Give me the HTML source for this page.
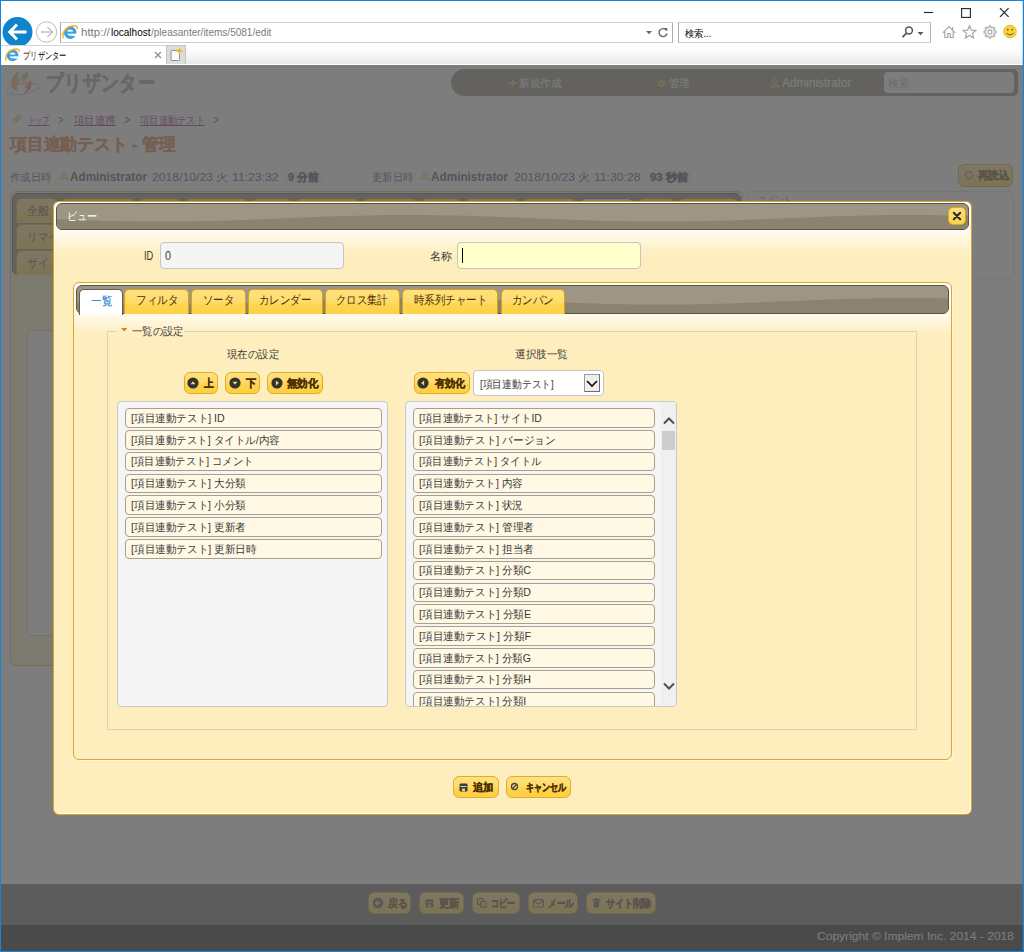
<!DOCTYPE html>
<html lang="ja">
<head>
<meta charset="utf-8">
<title>プリザンター</title>
<style>
*{box-sizing:border-box;margin:0;padding:0}
html,body{width:1024px;height:952px;overflow:hidden;background:#fff}
body{font-family:"Liberation Sans",sans-serif;font-size:12px;color:#000;position:relative}
#page,#chrome,#frame{position:absolute;left:0;top:0;width:1024px;height:952px;overflow:hidden}
#page div,#chrome div,#page svg,#chrome svg{position:absolute}
.t{position:absolute;white-space:nowrap;transform-origin:0 50%}
.bdg{background:#f2f2f2}
/* ---------- window frame ---------- */
#frame{border:1px solid #1883d7;box-shadow:inset -1px 0 0 rgba(24,131,215,.25);pointer-events:none}
#chrome{height:65px;background:#fff}
#tabrow{left:0;top:45px;width:1024px;height:19px;background:linear-gradient(#fff 0%,#fbfbfb 35%,#e8e8e8 100%)}
#tab1{left:1px;top:0;width:166px;height:20px;background:#fff;border-top:1px solid #d4d4d4}
#newtab{left:166px;top:0;width:20px;height:19px;background:#dcdcdc;border:1px solid #c2c2c2;border-bottom:none}
#addr{left:60px;top:22px;width:613px;height:21px;border:1px solid #cfcfcf;border-left-color:#a8a8a8;border-right-color:#b0b0b0;background:#fff}
#srch{left:678px;top:22px;width:253px;height:21px;border:1px solid #cfcfcf;border-left-color:#a8a8a8;border-right-color:#b0b0b0;background:#fff}
/* ---------- page ---------- */
#page{background:#fff}
#overlay{left:0;top:65px;width:1024px;height:887px;background:rgba(92,92,92,.8)}
#nav{left:451px;top:69px;width:567px;height:27px;border-radius:14px 5px 5px 14px;background:#817865}
#nav .sb{left:433px;top:3px;width:130px;height:21px;background:#fff;border-radius:4px}
#reload{left:958px;top:164px;width:55px;height:23px;border:1px solid #d19405;border-radius:6px;background:linear-gradient(#fee07e 0,#fedb6c 45%,#fed350 58%,#fecf42 100%)}
#etabs{left:10px;top:191px;width:733px;height:475px;border:1px solid #d8b24a;border-radius:6px;background:#feeebd}
#etnav{left:12px;top:193px;width:729px;height:82px;border:1px solid #494437;border-radius:6px;background:#817865}
.et{left:16px;width:722px;height:25px;border:1px solid #d19405;border-bottom:none;border-radius:6px 6px 0 0;background:linear-gradient(#fee07e 0,#fedb6c 45%,#fed350 58%,#fecf42 100%)}
#epanel{left:27px;top:330px;width:700px;height:306px;border:1px solid #c0c0c0;border-radius:4px;background:#fff}
#cmt{left:748px;top:191px;width:266px;height:88px;border:1px solid #d8d8d8;border-radius:6px;background:#fff}
#cmdbar{left:0;top:884px;width:1024px;height:41px;background:rgba(0,0,0,.65)}
#footer{left:0;top:925px;width:1024px;height:27px;background:#000}
.cb{top:892px;height:22px;border:1px solid #d19405;border-radius:6px;background:linear-gradient(#fee07e 0,#fedb6c 45%,#fed350 58%,#fecf42 100%)}
/* ---------- dialog ---------- */
#dlg{left:53px;top:201px;width:919px;height:614px;border:1px solid #dba52a;border-radius:6px;box-shadow:inset -1px -1px 0 rgba(255,249,228,.9);background:linear-gradient(#fffefb 0px,#fffefa 20px,#fffbef 29px,#fff5d8 40px,#fef0c5 48px,#feeebd 57px,#feeebd 100%)}
.hdr{border:1px solid #5a5444;border-radius:6px;background:#9e9684;overflow:hidden}
#dtitle{left:56px;top:203px;width:913px;height:27px}
#dclose{left:947.5px;top:207px;width:18px;height:18px;border:1px solid #e0a91c;border-radius:5px;background:linear-gradient(#fedf7a,#fed24a)}
.inp{height:27px;border:1px solid #c4c4c4;border-radius:4px}
#tabs{left:73px;top:282px;width:879px;height:478px;border:1px solid #dca72c;border-radius:6px;box-shadow:1px 1px 0 rgba(255,249,228,.8);background:linear-gradient(#fffefb 0px,#fffefa 20px,#fffbef 29px,#fff5d8 40px,#fef0c5 48px,#feeebd 57px,#feeebd 100%)}
#tnav{left:76px;top:285px;width:873px;height:29px}
.tb{top:288.6px;height:25px;border:1px solid #d9a01e;border-bottom:none;border-radius:5px 5px 0 0;background:linear-gradient(#fee07e 0,#fedb6c 50%,#fed450 62%,#fed04a 100%)}
.tb.on{top:289px;height:25.5px;background:#fff;border-color:#655e4e}
#fs{left:107px;top:331px;width:810px;height:399px;border:1px solid #d8d2be;border-top:none;border-radius:2px}
.fst{top:331px;height:1px;background:#d8d2be}
.btn{height:22px;border:1px solid #e2ab2a;border-radius:6px;background:linear-gradient(#fee07e 0,#fedb6c 45%,#fed350 58%,#fecf42 100%)}
.lst{top:401px;width:271px;height:305.5px;border:1px solid #c8c8c8;border-radius:4px;background:#f5f5f5;overflow:hidden}
.it{left:6.5px;height:19.5px;border:1px solid #a89f86;border-radius:4px;background:#fff8e4;font-size:12px;color:#383838}
.it .t{color:#383838}
#sel{left:473.2px;top:370.2px;width:131px;height:25.5px;border:1px solid #c4c4c4;border-radius:4px;background:#fff}
#sel u{position:absolute;left:110px;top:3.3px;width:16px;height:18px;border:1px solid #9a9a9a;border-right-color:#6e6e6e;border-bottom-color:#6e6e6e;background:#efefef}
#sbar{right:0;top:0;width:15px;height:304px;background:#f0f0f0}
#sthumb{left:1px;top:29px;width:13px;height:19px;background:#cdcdcd}
</style>
</head>
<body>
<div id="page">
  <!-- ======= underlying page ======= -->
  <svg width="40" height="30" viewBox="0 0 40 30" style="left:3px;top:68px">
    <ellipse cx="19.5" cy="21" rx="16.8" ry="5.2" fill="none" stroke="#b9b9b9" stroke-width="1" transform="rotate(-9 19.5 21)"/>
    <circle cx="8.8" cy="24.8" r="1.1" fill="#9a9a9a"/>
    <path d="M15.5 3.5C9 7 6.2 14 9.5 19.5c1.2 2 3 3.6 5 4.6-1-3-.8-6 .6-8.400 1.600-2.800 2.600-4.200 1.800-6.200-.6 1.600-2 2.400-3.200 1.800 1.400-2 1.800-5 1.800-7.800z" fill="#f4a556"/>
    <circle cx="14.400" cy="10.200" r="1.700" fill="#f7bf86"/>
    <path d="M18.200 6.500c1.400 1.600 3.400 1.600 4.800.6-1 1.200-1.600 2.600-1.400 4.400l.6 3.600c-1.800-1-3-2.600-3.400-4.600-.2-1.400-.2-2.800-.6-4z" fill="#b3c736"/>
    <path d="M22 3c2 .6 3.400 2.400 3 5-.400 2.200-1.600 3.800-3.200 5 .8-2 .8-3.800.2-5.400-.2-1.600-.2-3.200 0-4.600z" fill="#b3c736"/>
    <circle cx="20.400" cy="7" r="1.600" fill="#c9d75e"/>
    <path d="M27 11.500c2.600 3.800 2 8.800-1.600 11.500-1.600 1.200-3.400 1.800-5.200 2 2.400-1.600 3.800-3.600 4-6-.8 1-2.200 1.200-3.400.6 2.800-1.200 5.200-4.200 6.200-8.100z" fill="#ee7452"/>
    <circle cx="23.900" cy="16" r="1.700" fill="#f29077"/>
  </svg>
  <span class="t" style="transform:scaleX(0.8321);left:46px;top:69px;font-size:21.2px;line-height:27px;color:#909090;font-weight:bold;-webkit-text-stroke:.7px #909090;">プリザンター</span>
  <div id="nav">
    <div class="sb"></div>
  </div>
  <svg width="8" height="8" style="left:509px;top:79px"><path d="M4 0v8M0 4h8" stroke="#e0b94a" stroke-width="2"/></svg>
  <span class="t" style="transform:scaleX(0.9682);left:519px;top:75px;font-size:11.0px;line-height:16px;color:#fff;">新規作成</span>
  <svg width="9" height="9" viewBox="-4.5 -4.5 9 9" style="left:657px;top:78.5px"><circle r="2.6" fill="none" stroke="#e0b94a" stroke-width="2.4" stroke-dasharray="1.4 .65"/><circle r="2" fill="none" stroke="#e0b94a" stroke-width="1.4"/></svg>
  <span class="t" style="transform:scaleX(0.9318);left:668.5px;top:75px;font-size:11.0px;line-height:16px;color:#fff;">管理</span>
  <svg width="10" height="10" viewBox="0 0 10 10" style="left:770px;top:78px"><circle cx="5" cy="3" r="2" fill="none" stroke="#e0b94a" stroke-width="1.1"/><path d="M1 9c0-2.6 8-2.6 8 0z" fill="none" stroke="#e0b94a" stroke-width="1.1"/></svg>
  <span class="t" style="transform:scaleX(0.9832);left:782px;top:75px;font-size:12px;line-height:16px;color:#fff;">Administrator</span>
  <span class="t" style="transform:scaleX(0.9591);left:887.5px;top:74.5px;font-size:11.0px;line-height:16px;color:#a9a9a9;">検索</span>
  <svg width="10" height="10" viewBox="0 0 10 10" style="left:11.500px;top:113.500px"><g transform="rotate(-40 5 5)" fill="none" stroke="#dfb64a" stroke-width="1.500"><rect x=".8" y="3.400" width="4.800" height="3.200" rx="1.600"/><rect x="4.400" y="3.400" width="4.800" height="3.200" rx="1.600"/></g></svg>
  <span class="t" style="transform:scaleX(0.6515);left:28px;top:112.2px;font-size:11.0px;line-height:16px;color:#800080;text-decoration:underline;">トップ</span>
  <span class="t" style="transform:scaleX(0.7840);left:58px;top:112.2px;font-size:12px;line-height:16px;color:#333;">&gt;</span>
  <span class="t" style="transform:scaleX(0.9523);left:73.6px;top:112.2px;font-size:11.0px;line-height:16px;color:#800080;text-decoration:underline;">項目連携</span>
  <span class="t" style="transform:scaleX(0.8980);left:123.7px;top:112.2px;font-size:12px;line-height:16px;color:#333;">&gt;</span>
  <span class="t" style="transform:scaleX(0.8442);left:140.2px;top:112.2px;font-size:11.0px;line-height:16px;color:#800080;text-decoration:underline;">項目連動テスト</span>
  <span class="t" style="transform:scaleX(0.8125);left:213.3px;top:112.2px;font-size:12px;line-height:16px;color:#333;">&gt;</span>
  <span class="t" style="transform:scaleX(0.9872);left:9.6px;top:134.3px;font-size:16.6px;line-height:22px;color:#d2691e;font-weight:bold;-webkit-text-stroke:.4px #d2691e;">項目連動テスト - 管理</span>

  <span class="t" style="transform:scaleX(0.9432);left:10px;top:168.6px;font-size:11.0px;line-height:16px;color:#333;">作成日時</span>
  <svg class="pi" width="10" height="9" viewBox="0 0 10 9" style="left:58.5px;top:170.5px"><circle cx="5" cy="2.6" r="1.9" fill="none" stroke="#e0b94a" stroke-width="1.1"/><path d="M1 8c0-2.6 8-2.6 8 0z" fill="none" stroke="#e0b94a" stroke-width="1.1"/></svg>
  <span class="t" style="transform:scaleX(0.9786);left:69.8px;top:168.6px;font-size:12px;line-height:16px;color:#333;font-weight:bold;">Administrator</span>
  <span class="t" style="transform:scaleX(1.1089);left:151.8px;top:168.6px;font-size:11.0px;line-height:16px;color:#333;">2018/10/23 火 11:23:32</span>
  <div class="bdg" style="left:283px;top:170px;width:40px;height:13px"></div>
  <span class="t" style="transform:scaleX(0.9812);left:288.4px;top:168.6px;font-size:11.0px;line-height:16px;color:#333;font-weight:bold;-webkit-text-stroke:.3px #333;">9 分前</span>
  <span class="t" style="transform:scaleX(0.9409);left:371.6px;top:168.6px;font-size:11.0px;line-height:16px;color:#333;">更新日時</span>
  <svg class="pi" width="10" height="9" viewBox="0 0 10 9" style="left:419.5px;top:170.5px"><circle cx="5" cy="2.6" r="1.9" fill="none" stroke="#e0b94a" stroke-width="1.1"/><path d="M1 8c0-2.6 8-2.6 8 0z" fill="none" stroke="#e0b94a" stroke-width="1.1"/></svg>
  <span class="t" style="transform:scaleX(0.9798);left:431.4px;top:168.6px;font-size:12px;line-height:16px;color:#333;font-weight:bold;">Administrator</span>
  <span class="t" style="transform:scaleX(1.1080);left:513.5px;top:168.6px;font-size:11.0px;line-height:16px;color:#333;">2018/10/23 火 11:30:28</span>
  <div class="bdg" style="left:645px;top:170px;width:47px;height:13px"></div>
  <span class="t" style="transform:scaleX(1.0269);left:649.7px;top:168.6px;font-size:11.0px;line-height:16px;color:#333;font-weight:bold;-webkit-text-stroke:.3px #333;">93 秒前</span>

  <div id="reload"></div>
  <svg width="10" height="10" viewBox="-5 -5 10 10" style="left:963.5px;top:170px"><path d="M-3.4 1A3.5 3.5 0 0 1 2 -2.9M3.4 -1A3.5 3.5 0 0 1 -2 2.9" fill="none" stroke="#777" stroke-width="1.3"/><path d="M.8 -4.6L3.6 -2.4.6 -1.2zM-.8 4.6L-3.6 2.4-.6 1.2z" fill="#777"/></svg>
  <span class="t" style="transform:scaleX(0.9394);left:978px;top:167.3px;font-size:11.0px;line-height:16px;color:#4c3000;font-weight:bold;-webkit-text-stroke:.3px #4c3000;">再読込</span>

  <div id="etabs"></div>
  <div id="etnav"></div>
  <div class="et" style="top:198px;left:16px;width:42px"></div>
  <div class="et" style="top:198px;left:61px;width:74px"></div>
  <div class="et" style="top:198px;left:139px;width:42px"></div>
  <div class="et" style="top:198px;left:185px;width:63px"></div>
  <div class="et" style="top:198px;left:252px;width:40px"></div>
  <div class="et" style="top:198px;left:296px;width:63px"></div>
  <div class="et" style="top:198px;left:363px;width:54px"></div>
  <div class="et" style="top:198px;left:421px;width:40px"></div>
  <div class="et" style="top:198px;left:465px;width:54px"></div>
  <div class="et" style="top:198px;left:523px;width:53px"></div>
  <div class="et" style="top:198px;left:580px;width:54px;background:#fff;border-color:#655e4e"></div>
  <div class="et" style="top:198px;left:638px;width:37px"></div>
  <div class="et" style="top:198px;left:679px;width:59px"></div>
  <div class="et" style="top:224px"></div>
  <div class="et" style="top:250px"></div>
  <span class="t" style="transform:scaleX(0.9583);left:27px;top:202.5px;font-size:12.0px;line-height:17px;color:#4c3000;">全般</span>
  <span class="t" style="transform:scaleX(0.8750);left:27px;top:228.5px;font-size:12.0px;line-height:17px;color:#4c3000;">リマインダー</span>
  <span class="t" style="transform:scaleX(0.9417);left:27px;top:254.5px;font-size:12.0px;line-height:17px;color:#4c3000;">サイトのアクセス制御</span>
  <div id="epanel"></div>
  <div id="cmt"></div>
  <span class="t" style="transform:scaleX(0.7955);left:757px;top:191.5px;font-size:11.0px;line-height:16px;color:#777;">コメント</span>

  <div id="cmdbar"></div>
  <div class="cb" style="left:368px;width:43px"></div>
  <div class="cb" style="left:419px;width:45px"></div>
  <div class="cb" style="left:472px;width:48px"></div>
  <div class="cb" style="left:528px;width:50px"></div>
  <div class="cb" style="left:586px;width:70px"></div>
  <svg width="12" height="12" viewBox="-6 -6 12 12" style="left:371.5px;top:897px"><circle r="5.2" fill="#444"/><path d="M2.6 0h-4.6M.2 -2.6l-2.6 2.6 2.6 2.6" fill="none" stroke="#fece2f" stroke-width="1.5"/></svg>
  <svg width="9" height="9" viewBox="0 0 9 9" style="left:424.5px;top:898.5px"><rect x=".5" y=".5" width="8" height="8" rx="1.3" fill="#444"/><rect x="1.500" y="3" width="6" height="1" fill="#fece2f"/><rect x="3" y="5.600" width="3" height="2.400" fill="#fece2f"/></svg>
  <svg width="10" height="10" viewBox="0 0 10 10" style="left:477px;top:898px"><rect x=".6" y=".6" width="5.6" height="6" rx="1" fill="none" stroke="#444" stroke-width="1.2"/><rect x="3.6" y="3.4" width="5.6" height="6" rx="1" fill="#fece2f" stroke="#444" stroke-width="1.2"/></svg>
  <svg width="11" height="9" viewBox="0 0 11 9" style="left:533px;top:899px"><rect x=".6" y=".6" width="9.8" height="7.4" rx="1.2" fill="none" stroke="#444" stroke-width="1.2"/><path d="M1 1.5l4.5 3.6L10 1.5" fill="none" stroke="#444" stroke-width="1.1"/></svg>
  <svg width="9" height="10" viewBox="0 0 9 10" style="left:592px;top:898px"><path d="M.5 2h8M3 1h3" stroke="#444" stroke-width="1.3"/><path d="M1.4 3.2h6.2l-.6 6.3H2z" fill="#444"/></svg>
  <span class="t" style="transform:scaleX(0.8955);left:388px;top:895.3px;font-size:11.0px;line-height:16px;color:#4c3000;font-weight:bold;-webkit-text-stroke:.3px #4c3000;">戻る</span>
  <span class="t" style="transform:scaleX(0.9409);left:438.7px;top:895.3px;font-size:11.0px;line-height:16px;color:#4c3000;font-weight:bold;-webkit-text-stroke:.3px #4c3000;">更新</span>
  <span class="t" style="transform:scaleX(0.7424);left:490.5px;top:895.3px;font-size:11.0px;line-height:16px;color:#4c3000;font-weight:bold;-webkit-text-stroke:.3px #4c3000;">コピー</span>
  <span class="t" style="transform:scaleX(0.7788);left:547.6px;top:895.3px;font-size:11.0px;line-height:16px;color:#4c3000;font-weight:bold;-webkit-text-stroke:.3px #4c3000;">メール</span>
  <span class="t" style="transform:scaleX(0.8255);left:605.6px;top:895.3px;font-size:11.0px;line-height:16px;color:#4c3000;font-weight:bold;-webkit-text-stroke:.3px #4c3000;">サイト削除</span>
  <div id="footer"></div>
  <span class="t" style="transform:scaleX(1.0949);left:817px;top:928.8px;font-size:11px;line-height:15px;color:#fff;">Copyright © Implem Inc. 2014 - 2018</span>
  <div id="overlay"></div>

  <!-- ======= dialog ======= -->
  <div id="dlg"></div>
  <div id="dtitle" class="hdr"><svg width="911" height="25" style="left:0;top:0"><path d="M0,27 L0,15.2 L10,15.6 L20,16.0 L30,16.3 L40,16.6 L50,16.9 L60,17.1 L70,17.3 L80,17.5 L90,17.6 L100,17.6 L110,17.6 L120,17.5 L130,17.4 L140,17.2 L150,17.0 L160,16.8 L170,16.5 L180,16.2 L190,15.8 L200,15.4 L210,15.0 L220,14.6 L230,14.2 L240,13.8 L250,13.4 L260,13.0 L270,12.6 L280,12.3 L290,12.0 L300,11.7 L310,11.5 L320,11.3 L330,11.1 L340,11.0 L350,11.0 L360,11.0 L370,11.1 L380,11.2 L390,11.4 L400,11.6 L410,11.8 L420,12.1 L430,12.4 L440,12.8 L450,13.2 L460,13.6 L470,14.0 L480,14.4 L490,14.8 L500,15.2 L510,15.6 L520,16.0 L530,16.3 L540,16.6 L550,16.9 L560,17.1 L570,17.3 L580,17.5 L590,17.6 L600,17.6 L610,17.6 L620,17.5 L630,17.4 L640,17.2 L650,17.0 L660,16.8 L670,16.5 L680,16.2 L690,15.8 L700,15.4 L710,15.0 L720,14.6 L730,14.2 L740,13.8 L750,13.4 L760,13.0 L770,12.6 L780,12.3 L790,12.0 L800,11.7 L810,11.5 L820,11.3 L830,11.1 L840,11.0 L850,11.0 L860,11.0 L870,11.1 L880,11.2 L890,11.4 L900,11.6 L910,11.8 L920,12.1 L921,27 Z" fill="#8b8370"/></svg></div>
  <span class="t" style="transform:scaleX(0.9273);left:67px;top:207.6px;font-size:11.0px;line-height:16px;color:#fff;">ビュー</span>
  <div id="dclose"></div>
  <svg width="10" height="10" viewBox="0 0 10 10" style="left:952px;top:211px"><path d="M1.800 1.800l6.400 6.400M8.200 1.800L1.800 8.200" stroke="#2b2b2b" stroke-width="2.100" stroke-linecap="round"/></svg>
  <span class="t" style="transform:scaleX(0.7750);left:144px;top:248px;font-size:12px;line-height:16px;color:#383838;">ID</span>
  <div class="inp" style="left:160px;top:242px;width:184px;background:#f5f5f5"></div>
  <span class="t" style="transform:scaleX(0.8972);left:165px;top:248px;font-size:12px;line-height:16px;color:#383838;">0</span>
  <span class="t" style="transform:scaleX(1.0000);left:430px;top:248px;font-size:11.0px;line-height:16px;color:#383838;">名称</span>
  <div class="inp" style="left:457px;top:242px;width:184px;background:#ffffcc"></div>
  <div style="left:462px;top:248px;width:1px;height:15px;background:#000"></div>
  <div id="tabs"></div>
  <div id="tnav" class="hdr"><svg width="871" height="27" style="left:0;top:0"><path d="M0,29 L0,17.0 L10,17.3 L20,17.6 L30,17.9 L40,18.1 L50,18.3 L60,18.5 L70,18.6 L80,18.6 L90,18.6 L100,18.5 L110,18.4 L120,18.2 L130,18.0 L140,17.8 L150,17.5 L160,17.2 L170,16.8 L180,16.4 L190,16.0 L200,15.6 L210,15.2 L220,14.8 L230,14.4 L240,14.0 L250,13.6 L260,13.3 L270,13.0 L280,12.7 L290,12.5 L300,12.3 L310,12.1 L320,12.0 L330,12.0 L340,12.0 L350,12.1 L360,12.2 L370,12.4 L380,12.6 L390,12.8 L400,13.1 L410,13.4 L420,13.8 L430,14.2 L440,14.6 L450,15.0 L460,15.4 L470,15.8 L480,16.2 L490,16.6 L500,17.0 L510,17.3 L520,17.6 L530,17.9 L540,18.1 L550,18.3 L560,18.5 L570,18.6 L580,18.6 L590,18.6 L600,18.5 L610,18.4 L620,18.2 L630,18.0 L640,17.8 L650,17.5 L660,17.2 L670,16.8 L680,16.4 L690,16.0 L700,15.6 L710,15.2 L720,14.8 L730,14.4 L740,14.0 L750,13.6 L760,13.3 L770,13.0 L780,12.7 L790,12.5 L800,12.3 L810,12.1 L820,12.0 L830,12.0 L840,12.0 L850,12.1 L860,12.2 L870,12.4 L880,12.6 L881,29 Z" fill="#8b8370"/></svg></div>
  <div class="tb on" style="left:79px;width:44px"></div>
  <div class="tb" style="left:124.2px;width:64.5px"></div>
  <div class="tb" style="left:191.3px;width:54.3px"></div>
  <div class="tb" style="left:248px;width:74.5px"></div>
  <div class="tb" style="left:325px;width:74.7px"></div>
  <div class="tb" style="left:402.3px;width:95.8px"></div>
  <div class="tb" style="left:500.5px;width:64.8px"></div>
  <span class="t" style="transform:scaleX(0.8750);left:90.5px;top:292.5px;font-size:12.0px;line-height:17px;color:#0074c7;">一覧</span>
  <span class="t" style="transform:scaleX(0.8750);left:136px;top:291.9px;font-size:12.0px;line-height:17px;color:#4c3000;">フィルタ</span>
  <span class="t" style="transform:scaleX(0.8611);left:203px;top:291.9px;font-size:12.0px;line-height:17px;color:#4c3000;">ソータ</span>
  <span class="t" style="transform:scaleX(0.8667);left:259px;top:291.9px;font-size:12.0px;line-height:17px;color:#4c3000;">カレンダー</span>
  <span class="t" style="transform:scaleX(0.8617);left:336.3px;top:291.9px;font-size:12.0px;line-height:17px;color:#4c3000;">クロス集計</span>
  <span class="t" style="transform:scaleX(0.8714);left:413.8px;top:291.9px;font-size:12.0px;line-height:17px;color:#4c3000;">時系列チャート</span>
  <span class="t" style="transform:scaleX(0.8708);left:512px;top:291.9px;font-size:12.0px;line-height:17px;color:#4c3000;">カンバン</span>
  <div id="fs"></div>
  <div class="fst" style="left:107px;width:10px"></div><div class="fst" style="left:184px;width:733px"></div>
  <svg width="8" height="5" style="left:121px;top:328px"><path d="M0 0h6.400L3.200 3.600z" fill="#d9880b"/></svg>
  <span class="t" style="transform:scaleX(0.9400);left:131.8px;top:323.2px;font-size:11.0px;line-height:16px;color:#383838;">一覧の設定</span>
  <span class="t" style="transform:scaleX(0.9455);left:227px;top:346.3px;font-size:11.0px;line-height:16px;color:#383838;">現在の設定</span>
  <span class="t" style="transform:scaleX(0.9636);left:515px;top:346.2px;font-size:11.0px;line-height:16px;color:#383838;">選択肢一覧</span>
  <div class="btn" style="left:183.5px;top:372px;width:34.5px"></div>
  <div class="btn" style="left:225px;top:372px;width:34.7px"></div>
  <div class="btn" style="left:267px;top:372px;width:56px"></div>
  <div class="btn" style="left:413.8px;top:372px;width:56px"></div>
  <svg width="12" height="12" viewBox="-6 -6 12 12" style="left:186.8px;top:377.4px"><circle r="5.6" fill="#333"/><path d="M-2.5 1.3h5L0 -1.7z" fill="#fed65a"/></svg>
  <svg width="12" height="12" viewBox="-6 -6 12 12" style="left:228.8px;top:377.4px"><circle r="5.6" fill="#333"/><path d="M-2.5 -1.2h5L0 1.800z" fill="#fed65a"/></svg>
  <svg width="12" height="12" viewBox="-6 -6 12 12" style="left:270.8px;top:377.4px"><circle r="5.6" fill="#333"/><path d="M-1.100 -2.500v5L1.900 0z" fill="#fed65a"/></svg>
  <svg width="12" height="12" viewBox="-6 -6 12 12" style="left:416.6px;top:377.4px"><circle r="5.6" fill="#333"/><path d="M1.100 -2.500v5L-1.900 0z" fill="#fed65a"/></svg>
  <span class="t" style="transform:scaleX(0.8909);left:203.5px;top:375.4px;font-size:11.0px;line-height:16px;color:#4c3000;font-weight:bold;-webkit-text-stroke:.3px #4c3000;">上</span>
  <span class="t" style="transform:scaleX(0.9273);left:245.5px;top:375.4px;font-size:11.0px;line-height:16px;color:#4c3000;font-weight:bold;-webkit-text-stroke:.3px #4c3000;">下</span>
  <span class="t" style="transform:scaleX(0.9545);left:287px;top:375.4px;font-size:11.0px;line-height:16px;color:#4c3000;font-weight:bold;-webkit-text-stroke:.3px #4c3000;">無効化</span>
  <span class="t" style="transform:scaleX(0.9212);left:434.6px;top:375.4px;font-size:11.0px;line-height:16px;color:#4c3000;font-weight:bold;-webkit-text-stroke:.3px #4c3000;">有効化</span>
  <div id="sel"><u></u></div>
  <svg width="12" height="8" style="left:586px;top:380px"><path d="M1 1l5 5 5-5" fill="none" stroke="#111" stroke-width="1.7"/></svg>
  <span class="t" style="transform:scaleX(0.8878);left:479.7px;top:375.6px;font-size:11.0px;line-height:16px;color:#383838;">[項目連動テスト]</span>
  <div class="lst" id="l1" style="left:117px">
<div class="it" style="top:6.20px;width:257px"><span class="t" style="transform:scaleX(0.9643);left:5.5px;top:.5px;line-height:17px;font-size:11px">[項目連動テスト] ID</span></div>
<div class="it" style="top:28.00px;width:257px"><span class="t" style="transform:scaleX(0.9592);left:5.5px;top:.5px;line-height:17px;font-size:11px">[項目連動テスト] タイトル/内容</span></div>
<div class="it" style="top:49.80px;width:257px"><span class="t" style="transform:scaleX(0.9395);left:5.5px;top:.5px;line-height:17px;font-size:11px">[項目連動テスト] コメント</span></div>
<div class="it" style="top:71.60px;width:257px"><span class="t" style="transform:scaleX(0.9633);left:5.5px;top:.5px;line-height:17px;font-size:11px">[項目連動テスト] 大分類</span></div>
<div class="it" style="top:93.40px;width:257px"><span class="t" style="transform:scaleX(0.9633);left:5.5px;top:.5px;line-height:17px;font-size:11px">[項目連動テスト] 小分類</span></div>
<div class="it" style="top:115.20px;width:257px"><span class="t" style="transform:scaleX(0.9633);left:5.5px;top:.5px;line-height:17px;font-size:11px">[項目連動テスト] 更新者</span></div>
<div class="it" style="top:137.00px;width:257px"><span class="t" style="transform:scaleX(0.9649);left:5.5px;top:.5px;line-height:17px;font-size:11px">[項目連動テスト] 更新日時</span></div>
  </div>
  <div class="lst" id="l2" style="left:405px;width:272px">
<div class="it" style="top:6.20px;width:242px"><span class="t" style="transform:scaleX(0.9434);left:5.5px;top:.5px;line-height:17px;font-size:11px">[項目連動テスト] サイトID</span></div>
<div class="it" style="top:28.00px;width:242px"><span class="t" style="transform:scaleX(0.9662);left:5.5px;top:.5px;line-height:17px;font-size:11px">[項目連動テスト] バージョン</span></div>
<div class="it" style="top:49.80px;width:242px"><span class="t" style="transform:scaleX(0.9395);left:5.5px;top:.5px;line-height:17px;font-size:11px">[項目連動テスト] タイトル</span></div>
<div class="it" style="top:71.60px;width:242px"><span class="t" style="transform:scaleX(0.9614);left:5.5px;top:.5px;line-height:17px;font-size:11px">[項目連動テスト] 内容</span></div>
<div class="it" style="top:93.40px;width:242px"><span class="t" style="transform:scaleX(0.9614);left:5.5px;top:.5px;line-height:17px;font-size:11px">[項目連動テスト] 状況</span></div>
<div class="it" style="top:115.20px;width:242px"><span class="t" style="transform:scaleX(0.9633);left:5.5px;top:.5px;line-height:17px;font-size:11px">[項目連動テスト] 管理者</span></div>
<div class="it" style="top:137.00px;width:242px"><span class="t" style="transform:scaleX(0.9633);left:5.5px;top:.5px;line-height:17px;font-size:11px">[項目連動テスト] 担当者</span></div>
<div class="it" style="top:158.80px;width:242px"><span class="t" style="transform:scaleX(0.9645);left:5.5px;top:.5px;line-height:17px;font-size:11px">[項目連動テスト] 分類C</span></div>
<div class="it" style="top:180.60px;width:242px"><span class="t" style="transform:scaleX(0.9645);left:5.5px;top:.5px;line-height:17px;font-size:11px">[項目連動テスト] 分類D</span></div>
<div class="it" style="top:202.40px;width:242px"><span class="t" style="transform:scaleX(0.9696);left:5.5px;top:.5px;line-height:17px;font-size:11px">[項目連動テスト] 分類E</span></div>
<div class="it" style="top:224.20px;width:242px"><span class="t" style="transform:scaleX(0.9748);left:5.5px;top:.5px;line-height:17px;font-size:11px">[項目連動テスト] 分類F</span></div>
<div class="it" style="top:246.00px;width:242px"><span class="t" style="transform:scaleX(0.9594);left:5.5px;top:.5px;line-height:17px;font-size:11px">[項目連動テスト] 分類G</span></div>
<div class="it" style="top:267.80px;width:242px"><span class="t" style="transform:scaleX(0.9645);left:5.5px;top:.5px;line-height:17px;font-size:11px">[項目連動テスト] 分類H</span></div>
<div class="it" style="top:289.60px;width:242px"><span class="t" style="transform:scaleX(0.9646);left:5.5px;top:.5px;line-height:17px;font-size:11px">[項目連動テスト] 分類I</span></div>
    <div id="sbar"><div id="sthumb"></div>
      <svg width="16" height="304" style="left:0;top:0"><path d="M3 21.5l5-5 5 5M3 281.5l5 5 5-5" fill="none" stroke="#505050" stroke-width="2"/></svg>
    </div>
  </div>
  <div class="btn" style="left:453px;top:775.5px;width:45.6px"></div>
  <div class="btn" style="left:505.5px;top:775.5px;width:65.2px"></div>
  <svg width="9" height="9" viewBox="0 0 9 9" style="left:458.5px;top:782.5px"><rect x=".5" y=".5" width="8" height="8" rx="1.3" fill="#333a50"/><rect x="1.500" y="3" width="6" height="1" fill="#fed65a"/><rect x="3" y="5.600" width="3" height="2.400" fill="#fed65a"/></svg>
  <svg width="9" height="9" viewBox="-4.5 -4.5 9 9" style="left:510.4px;top:781.7px"><circle r="3" fill="none" stroke="#444" stroke-width="1.3"/><path d="M-2 2l4-4" stroke="#444" stroke-width="1.3"/></svg>
  <span class="t" style="transform:scaleX(0.9318);left:473.4px;top:779px;font-size:11.0px;line-height:16px;color:#4c3000;font-weight:bold;-webkit-text-stroke:.3px #4c3000;">追加</span>
  <span class="t" style="transform:scaleX(0.7327);left:526px;top:779px;font-size:11.0px;line-height:16px;color:#4c3000;font-weight:bold;-webkit-text-stroke:.3px #4c3000;">キャンセル</span>
</div>
<div id="chrome">
  <div id="addr"></div>
  <div id="srch"></div>
  <svg width="70" height="65" viewBox="0 0 70 65" style="left:0;top:0">
    <circle cx="17.5" cy="32" r="15" fill="#0e84cc"/>
    <path d="M26.5 32H10.5M17 24.5L9.8 32l7.2 7.5" fill="none" stroke="#fff" stroke-width="3"/>
    <circle cx="46.5" cy="32" r="10.2" fill="#fff" stroke="#bdbdbd" stroke-width="1"/>
    <path d="M41 32h11M47.5 27l5 5-5 5" fill="none" stroke="#c2c2c2" stroke-width="1.5"/>
  </svg>
  <div id="tabrow">
    <div id="tab1"></div>
    <div id="newtab"></div>
  </div>
  <span class="t" style="transform:scaleX(1.0007);left:81px;top:25.25px;font-size:11.5px;line-height:15.5px;color:#7b7b7b;">http://</span>
  <span class="t" style="transform:scaleX(0.8702);left:110.5px;top:25.25px;font-size:11.5px;line-height:15.5px;color:#000;">localhost</span>
  <span class="t" style="transform:scaleX(0.8719);left:150.6px;top:25.25px;font-size:11.5px;line-height:15.5px;color:#7b7b7b;">/pleasanter/items/5081/edit</span>
  <span class="t" style="transform:scaleX(0.9253);left:684.7px;top:25.5px;font-size:10.1px;line-height:15px;color:#000;">検索...</span>
  <span class="t" style="transform:scaleX(0.7250);left:22.5px;top:47.5px;font-size:10.1px;line-height:15px;color:#000;">プリザンター</span>
  <svg id="csvg" width="1024" height="65" viewBox="0 0 1024 65" style="left:0;top:0">
  <g transform="translate(70.2,32.6) scale(1)">
    <circle r="4.7" fill="none" stroke="#3b9fe4" stroke-width="3.2"/>
    <rect x="-4.5" y="-1" width="10" height="2.1" fill="#3b9fe4"/>
    <rect x="1.2" y="1.1" width="6" height="2.3" fill="#fff"/>
    <path d="M-6.9 5.7C-8 2-6.5-2-3.5-4.3-.5-6.5 4-7.600 6.300-6.200 7.400-5.500 7.200-4.300 6.600-3.600" fill="none" stroke="#f3b416" stroke-width="1.500"/>
  </g>
  <g transform="translate(12.6,55.4) scale(0.93)">
    <circle r="4.7" fill="none" stroke="#3b9fe4" stroke-width="3.2"/>
    <rect x="-4.5" y="-1" width="10" height="2.1" fill="#3b9fe4"/>
    <rect x="1.2" y="1.1" width="6" height="2.3" fill="#fff"/>
    <path d="M-6.9 5.7C-8 2-6.5-2-3.5-4.3-.5-6.5 4-7.600 6.300-6.200 7.400-5.500 7.200-4.300 6.600-3.600" fill="none" stroke="#f3b416" stroke-width="1.500"/>
  </g>
  <path d="M646 31h6l-3 3.2z" fill="#666"/>
  <path d="M666.3 30.2a4 4 0 1 0 .7 3.3" fill="none" stroke="#666" stroke-width="1.4"/>
  <path d="M663.6 28l3.6 0 0 3.6z" fill="#666"/>
  <circle cx="909" cy="30.5" r="3.4" fill="none" stroke="#555" stroke-width="1.5"/>
  <path d="M906.5 33.2l-4 4" stroke="#555" stroke-width="1.8"/>
  <path d="M917.5 32h6l-3 3.2z" fill="#555"/>
  <path d="M942.8 32.8l6.2-6.2 6.2 6.2M944.8 31.2v6.3h3v-4h2.4v4h3v-6.3M952.6 29.8v-2.6" fill="none" stroke="#a6a6a6" stroke-width="1.2"/>
  <path d="M969.5 25.8l1.8 4.3 4.6.3-3.5 3 1.1 4.5-4-2.5-4 2.5 1.1-4.5-3.5-3 4.6-.3z" fill="none" stroke="#a6a6a6" stroke-width="1.2"/>
  <g transform="translate(990,32)" fill="none" stroke="#a6a6a6" stroke-width="1.1"><path d="M4.40,-0.96 L5.92,-0.99 L5.92,0.99 L4.40,0.96 L3.79,2.43 L4.88,3.49 L3.49,4.88 L2.43,3.79 L0.96,4.40 L0.99,5.92 L-0.99,5.92 L-0.96,4.40 L-2.43,3.79 L-3.49,4.88 L-4.88,3.49 L-3.79,2.43 L-4.40,0.96 L-5.92,0.99 L-5.92,-0.99 L-4.40,-0.96 L-3.79,-2.43 L-4.88,-3.49 L-3.49,-4.88 L-2.43,-3.79 L-0.96,-4.40 L-0.99,-5.92 L0.99,-5.92 L0.96,-4.40 L2.43,-3.79 L3.49,-4.88 L4.88,-3.49 L3.79,-2.43Z" stroke-linejoin="round"/><circle r="2.1"/></g>
  <circle cx="1010" cy="31.5" r="6.3" fill="#f8d53a" stroke="#d9b31f" stroke-width=".8"/>
  <circle cx="1007.8" cy="29.6" r=".9" fill="#6b5410"/><circle cx="1012.2" cy="29.6" r=".9" fill="#6b5410"/>
  <path d="M1006.5 33.2q3.5 3.2 7 0" fill="none" stroke="#6b5410" stroke-width="1"/>
  <path d="M924 12.5h9" stroke="#222" stroke-width="1.100"/>
  <rect x="961.600" y="8.600" width="8.800" height="8.800" fill="none" stroke="#222" stroke-width="1.100"/>
  <path d="M1000 8.2l8.6 8.6M1008.6 8.2l-8.6 8.6" stroke="#222" stroke-width="1.2"/>
  <path d="M155 52l6 6M161 52l-6 6" stroke="#8a8a8a" stroke-width="1.2"/>
  <rect x="171" y="50.5" width="8.5" height="10" fill="#fafafa" stroke="#8e8e8e" stroke-width="1" rx="1"/>
  <path d="M179.5 47.2l1.1 2.6 2.6 1.2-2.6 1.2-1.1 2.6-1.1-2.6-2.6-1.2 2.6-1.2z" fill="#f5b52e"/>
  </svg>
</div>
<div id="frame"></div>
</body>
</html>
